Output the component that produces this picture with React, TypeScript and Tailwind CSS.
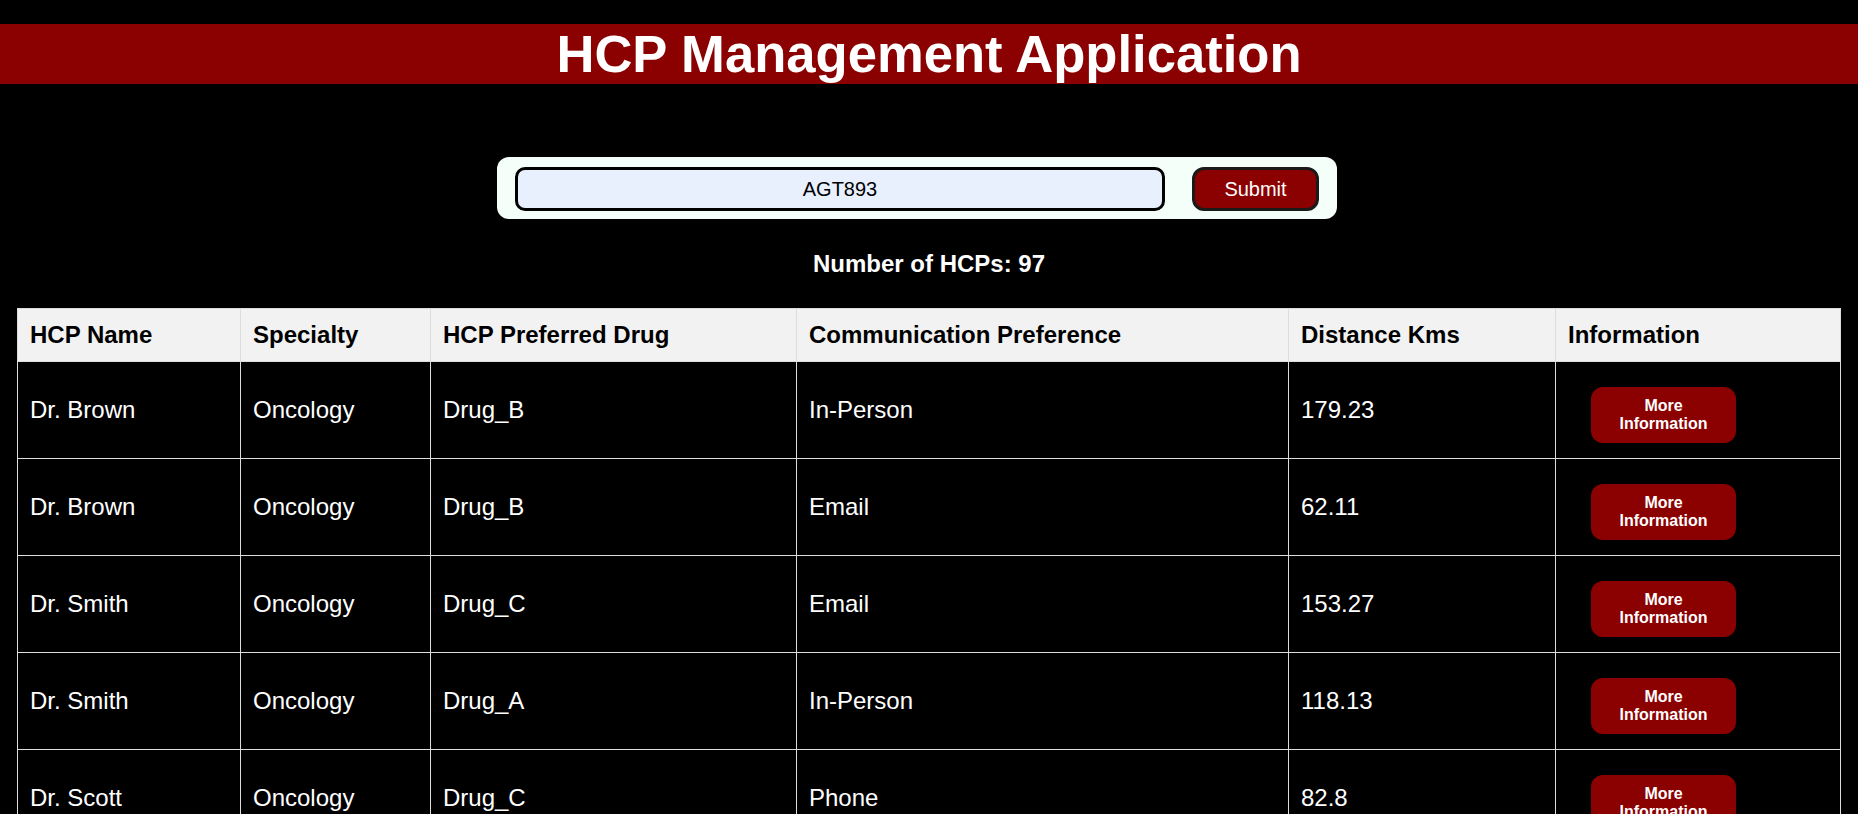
import React from "react";

const rows = [
  ["Dr. Brown", "Oncology", "Drug_B", "In-Person", "179.23"],
  ["Dr. Brown", "Oncology", "Drug_B", "Email", "62.11"],
  ["Dr. Smith", "Oncology", "Drug_C", "Email", "153.27"],
  ["Dr. Smith", "Oncology", "Drug_A", "In-Person", "118.13"],
  ["Dr. Scott", "Oncology", "Drug_C", "Phone", "82.8"],
  ["Dr. Lee", "Oncology", "Drug_A", "Email", "45.6"],
];

const headers = [
  "HCP Name",
  "Specialty",
  "HCP Preferred Drug",
  "Communication Preference",
  "Distance Kms",
  "Information",
];

export default function App() {
  return (
    <div className="h-[814px] overflow-hidden bg-black font-['Liberation_Sans',Arial,sans-serif]">
      <div className="pt-[24px]">
        <h1 className="h-[60px] bg-[#8b0000] text-center text-[52.6px] font-bold leading-[60px] text-white">
          HCP Management Application
        </h1>
      </div>

      <div className="mt-[73px] flex justify-center">
        <form
          className="mr-[24px] flex h-[62px] w-[840px] items-start gap-[27px] rounded-[12px] bg-[#f5fffa] px-[18px] pt-[10px]"
          onSubmit={(e) => e.preventDefault()}
        >
          <input
            className="h-[44px] w-[650px] rounded-[10px] border-[3px] border-black bg-[#e8f0fe] text-center text-[20px] text-black outline-none"
            defaultValue="AGT893"
          />
          <button
            type="submit"
            className="h-[44px] w-[127px] rounded-[12px] border-[3px] border-[#1a1a1a] bg-[#8b0000] text-[20px] text-white"
          >
            Submit
          </button>
        </form>
      </div>

      <p className="mt-[31px] text-center text-[24px] font-bold leading-[28px] text-white">
        Number of HCPs: 97
      </p>

      <div className="mx-[17px] mt-[30px] grid grid-cols-[223px_190px_366px_492px_267px_286px]">
        {headers.map((h, i) => (
          <div
            key={h}
            className={
              i === headers.length - 1
                ? "flex h-[53px] items-center border-l border-r border-t border-[#dddddd] bg-[#f2f2f2] px-[12px] text-[24px] font-bold text-black"
                : "flex h-[53px] items-center border-l border-t border-[#dddddd] bg-[#f2f2f2] px-[12px] text-[24px] font-bold text-black"
            }
          >
            {h}
          </div>
        ))}
        {rows.map((r, ri) => (
          <React.Fragment key={ri}>
            {r.map((c, ci) => (
              <div
                key={ci}
                className="flex h-[97px] items-center border-l border-t border-[#dddddd] px-[12px] text-[24px] text-white"
              >
                {c}
              </div>
            ))}
            <div className="flex h-[97px] items-center border-l border-r border-t border-[#dddddd] px-[12px]">
              <button className="ml-[23px] mt-[10px] h-[56px] w-[145px] rounded-[12px] bg-[#8b0000] text-[16px] font-bold leading-[18.4px] text-white">
                More
                <br />
                Information
              </button>
            </div>
          </React.Fragment>
        ))}
      </div>
    </div>
  );
}
